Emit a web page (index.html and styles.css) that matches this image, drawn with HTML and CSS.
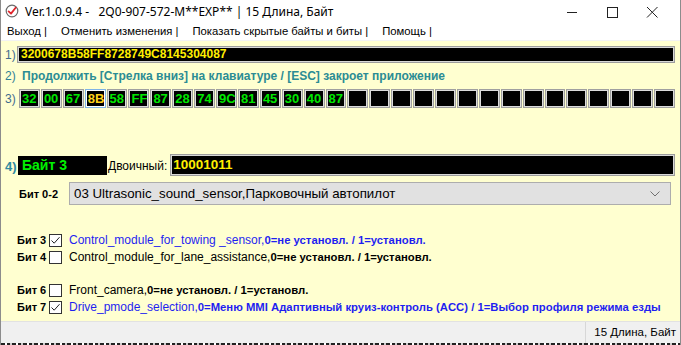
FILE: index.html
```html
<!DOCTYPE html>
<html lang="ru">
<head>
    <meta charset="UTF-8">
    <meta name="viewport" content="width=device-width, initial-scale=1.0">
    <title>Ver.1.0.9.4</title>
    <link rel="stylesheet" href="styles.css">
</head>
<body>
    <div class="window">
        <header class="titlebar">
            <svg class="app-icon" width="14" height="14" viewBox="0 0 14 14">
                <circle cx="7" cy="7" r="5.8" fill="#fff" stroke="#6a6a6a" stroke-width="1.2"/>
                <path d="M3.6 7.4 L6 9.6 L10.6 3.8" fill="none" stroke="#e0242b" stroke-width="1.8" stroke-linecap="round" stroke-linejoin="round"/>
            </svg>
            <span class="title">Ver.1.0.9.4 - &nbsp;&nbsp;2Q0-907-572-M**EXP** | 15 Длина, Байт</span>
            <div class="controls">
                <svg width="46" height="22" viewBox="0 0 46 22"><path d="M18 11.5 H28" stroke="#222" stroke-width="1"/></svg>
                <svg width="46" height="22" viewBox="0 0 46 22"><rect x="18.5" y="6.5" width="10" height="10" fill="none" stroke="#222" stroke-width="1"/></svg>
                <svg width="46" height="22" viewBox="0 0 46 22"><path d="M18 6 L28.5 16.5 M28.5 6 L18 16.5" stroke="#222" stroke-width="1"/></svg>
            </div>
        </header>

        <nav class="menubar">
            <span class="menu-item">Выход |</span>
            <span class="menu-item">Отменить изменения |</span>
            <span class="menu-item">Показать скрытые байты и биты |</span>
            <span class="menu-item">Помощь |</span>
        </nav>

        <main class="client">
            <div class="row row-hex">
                <span class="num">1)</span>
                <div class="field hex">3200678B58FF8728749C8145304087</div>
            </div>

            <div class="row row-hint">
                <span class="num">2)</span>
                <span class="hint">Продолжить [Стрелка вниз] на клавиатуре / [ESC] закроет приложение</span>
            </div>

            <div class="row row-bytes">
                <span class="num">3)</span>
                <div class="bytes">
                    <span class="cell">32</span>
                    <span class="cell">00</span>
                    <span class="cell">67</span>
                    <span class="cell current">8B</span>
                    <span class="cell">58</span>
                    <span class="cell">FF</span>
                    <span class="cell">87</span>
                    <span class="cell">28</span>
                    <span class="cell">74</span>
                    <span class="cell">9C</span>
                    <span class="cell">81</span>
                    <span class="cell">45</span>
                    <span class="cell">30</span>
                    <span class="cell">40</span>
                    <span class="cell">87</span>
                    <span class="cell"></span>
                    <span class="cell"></span>
                    <span class="cell"></span>
                    <span class="cell"></span>
                    <span class="cell"></span>
                    <span class="cell"></span>
                    <span class="cell"></span>
                    <span class="cell"></span>
                    <span class="cell"></span>
                    <span class="cell"></span>
                    <span class="cell"></span>
                    <span class="cell"></span>
                    <span class="cell"></span>
                    <span class="cell"></span>
                    <span class="cell"></span>
                </div>
            </div>

            <div class="row row-byte">
                <span class="num num4">4)</span>
                <div class="byte-name">Байт 3</div>
                <span class="bin-label">Двоичный:</span>
                <div class="field bin">10001011</div>
            </div>

            <div class="row row-select">
                <span class="bit-range">Бит 0-2</span>
                <div class="select">
                    <span>03 Ultrasonic_sound_sensor,Парковочный автопилот</span>
                    <svg class="chevron" width="10" height="6" viewBox="0 0 10 6"><path d="M0.5 0.5 L5 5 L9.5 0.5" fill="none" stroke="#707070" stroke-width="1"/></svg>
                </div>
            </div>

            <ul class="bits">
                <li class="bit on">
                    <span class="bit-no">Бит 3</span>
                    <span class="check"><svg width="11" height="11" viewBox="0 0 11 11"><path d="M1.5 5.5 L4.2 8.2 L9.5 2.2" fill="none" stroke="#222" stroke-width="1"/></svg></span>
                    <span class="bit-text">Control_module_for_towing _sensor,<b>0=не установл. / 1=установл.</b></span>
                </li>
                <li class="bit">
                    <span class="bit-no">Бит 4</span>
                    <span class="check"></span>
                    <span class="bit-text">Control_module_for_lane_assistance,<b>0=не установл. / 1=установл.</b></span>
                </li>
                <li class="bit empty"></li>
                <li class="bit">
                    <span class="bit-no">Бит 6</span>
                    <span class="check"></span>
                    <span class="bit-text">Front_camera,<b>0=не установл. / 1=установл.</b></span>
                </li>
                <li class="bit on">
                    <span class="bit-no">Бит 7</span>
                    <span class="check"><svg width="11" height="11" viewBox="0 0 11 11"><path d="M1.5 5.5 L4.2 8.2 L9.5 2.2" fill="none" stroke="#222" stroke-width="1"/></svg></span>
                    <span class="bit-text">Drive_pmode_selection,<b>0=Меню MMI Адаптивный круиз-контроль (ACC) / 1=Выбор профиля режима езды</b></span>
                </li>
            </ul>
        </main>

        <footer class="statusbar">
            <span class="status-cell">15 Длина, Байт</span>
        </footer>
        <div class="behind"></div>
    </div>
</body>
</html>
```

FILE: styles.css
```css
* {
    box-sizing: border-box;
}

body {
    margin: 0;
    background: #fff;
    font-family: "Liberation Sans", Arial, sans-serif;
    color: #000;
}

.window {
    width: 681px;
    height: 345px;
    display: flex;
    flex-direction: column;
    border-left: 1px solid #8c8c8c;
    border-right: 1px solid #8c8c8c;
    overflow: hidden;
}

/* title bar */
.titlebar {
    height: 22px;
    display: flex;
    align-items: center;
    padding-left: 4px;
    font-family: "Noto Sans", sans-serif;
    font-size: 12px;
}

.app-icon {
    margin-right: 6px;
}

.title {
    flex: 1;
    white-space: nowrap;
}

.controls {
    display: flex;
    margin-right: 5px;
    margin-top: 2px;
}

.controls svg {
    display: block;
    margin-left: -6px;
}

/* menu */
.menubar {
    height: 19px;
    display: flex;
    align-items: center;
    padding-left: 6px;
    font-size: 11.3px;
    border-bottom: 1px solid #f2f2f2;
}

.menu-item {
    margin-right: 14px;
    white-space: nowrap;
}

/* client area */
.client {
    height: 280px;
    background: #ffffd0;
    padding: 0 5px 0 4px;
    display: flex;
    flex-direction: column;
}

.row {
    display: flex;
    align-items: center;
}

.num {
    width: 12px;
    flex-shrink: 0;
    font-size: 12px;
    color: #3f6c8f;
}

.field {
    background: #000;
    border: 1px solid #9c9c9c;
    box-shadow: inset 0 0 0 1px #d8d8d8;
    font-weight: bold;
    color: #ffee00;
    white-space: nowrap;
}

.row-hex {
    margin-top: 5px;
}

.hex {
    flex: 1;
    height: 17px;
    padding: 0 3px;
    font-size: 12px;
    line-height: 15px;
}

.row-hint {
    margin-top: 6px;
    height: 14px;
}

.row-hint .num {
    color: #2f7f96;
}

.hint {
    margin-left: 5px;
    font-size: 12px;
    font-weight: bold;
    color: #2b8c94;
    white-space: nowrap;
}

.row-bytes {
    margin-top: 6px;
}

.bytes {
    flex: 1;
    margin-left: 2px;
    display: grid;
    grid-template-columns: repeat(30, 1fr);
    gap: 1px;
}

.cell {
    height: 19px;
    background: #000;
    border: 1px solid #a0a0a0;
    box-shadow: inset 0 0 0 1px #dcdcdc;
    font-size: 13px;
    font-weight: bold;
    line-height: 17px;
    padding-left: 2px;
    color: #00e600;
    overflow: hidden;
    white-space: nowrap;
}

.cell.current {
    border-color: #7fb3e6;
    box-shadow: inset 0 0 0 1px #fff;
    color: #ffd21a;
}

.row-byte {
    margin-top: 46px;
    align-items: flex-end;
}

.num4 {
    font-weight: bold;
    color: #2e8aa0;
    padding-bottom: 2px;
    font-size: 13px;
}

.byte-name {
    width: 89px;
    height: 19px;
    margin-left: 1px;
    margin-bottom: 1px;
    background: #000;
    color: #00f000;
    font-size: 14px;
    font-weight: bold;
    line-height: 19px;
    padding-left: 4px;
}

.bin-label {
    margin-left: 1px;
    font-size: 12px;
    padding-bottom: 3px;
}

.bin {
    flex: 1;
    height: 22px;
    margin-left: 3px;
    padding-left: 2px;
    font-size: 13.5px;
    line-height: 20px;
}

.row-select {
    margin-top: 6px;
}

.bit-range {
    width: 50px;
    flex-shrink: 0;
    margin-left: 14px;
    font-size: 11px;
    font-weight: bold;
}

.select {
    flex: 1;
    height: 23px;
    margin-right: 4px;
    display: flex;
    align-items: center;
    justify-content: space-between;
    padding: 0 10px 0 4px;
    background: #e1e1e1;
    border: 1px solid #adadad;
    font-size: 13.3px;
}

/* bit list */
.bits {
    list-style: none;
    margin: 27px 0 0;
    padding: 0;
}

.bit {
    height: 16.7px;
    display: flex;
    align-items: center;
    font-size: 12px;
}

.bit b {
    font-size: 11.3px;
}

.bit-no {
    width: 32px;
    flex-shrink: 0;
    margin-left: 12px;
    font-size: 11px;
    font-weight: bold;
    white-space: nowrap;
}

.check {
    width: 13px;
    height: 13px;
    flex-shrink: 0;
    background: #fff;
    border: 1px solid #333;
    display: flex;
    align-items: center;
    justify-content: center;
}

.bit-text {
    margin-left: 7px;
    white-space: nowrap;
}

.bit.on .bit-text {
    color: #1f1ff0;
}

/* status bar */
.statusbar {
    height: 22px;
    display: flex;
    justify-content: flex-end;
    background: #f0f0f0;
    border-top: 1px solid #e2e2e2;
    font-size: 11.5px;
}

.status-cell {
    border-left: 1px solid #d7d7d7;
    padding: 4px 4px 0 8px;
}

.behind {
    height: 2px;
    background: repeating-linear-gradient(90deg, #222 0 4px, #fff 4px 6px, #222 6px 9px, #ccc 9px 11px);
}
```
